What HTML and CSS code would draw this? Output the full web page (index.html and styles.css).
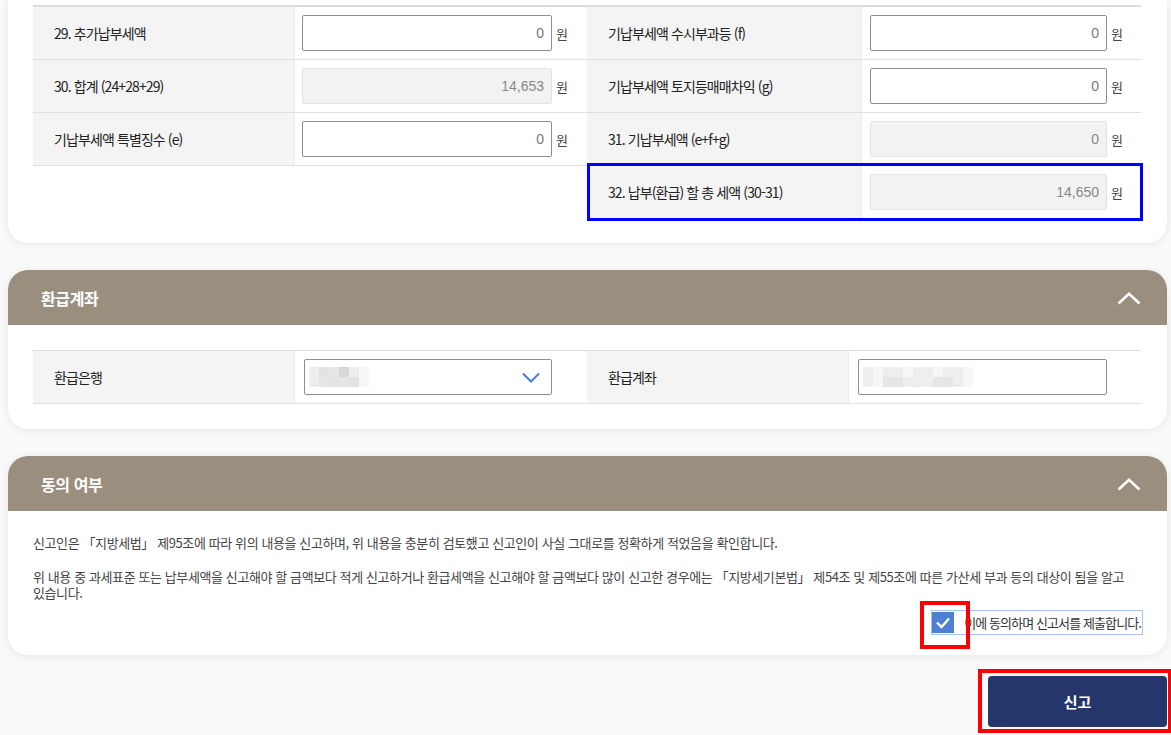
FILE: index.html
```html
<!DOCTYPE html>
<html lang="ko">
<head>
<meta charset="utf-8">
<title>신고</title>
<link rel="stylesheet" href="styles.css">
</head>
<body>
<div class="page">
  <section class="card card-top">
    <div class="grid grid-tax">
      <div class="th">29. 추가납부세액</div>
      <div class="td td-l"><span class="inp">0</span><span class="unit">원</span></div>
      <div class="th">기납부세액 수시부과등 (f)</div>
      <div class="td td-r"><span class="inp inp-r">0</span><span class="unit">원</span></div>

      <div class="th">30. 합계 (24+28+29)</div>
      <div class="td td-l"><span class="inp dis">14,653</span><span class="unit">원</span></div>
      <div class="th">기납부세액 토지등매매차익 (g)</div>
      <div class="td td-r"><span class="inp inp-r">0</span><span class="unit">원</span></div>

      <div class="th">기납부세액 특별징수 (e)</div>
      <div class="td td-l"><span class="inp">0</span><span class="unit">원</span></div>
      <div class="th">31. 기납부세액 (e+f+g)</div>
      <div class="td td-r"><span class="inp inp-r dis">0</span><span class="unit">원</span></div>

      <div class="blank"></div>
      <div class="blank"></div>
      <div class="hl">
        <div class="th">32. 납부(환급) 할 총 세액 (30-31)</div>
        <div class="td td-r"><span class="inp inp-r dis">14,650</span><span class="unit">원</span></div>
      </div>
    </div>
  </section>

  <section class="card">
    <header class="card-head">
      <h2>환급계좌</h2>
      <svg class="chev" width="24" height="13" viewBox="0 0 24 13"><polyline points="1.5,11.5 12,1.8 22.5,11.5" fill="none" stroke="#fff" stroke-width="2.6"/></svg>
    </header>
    <div class="card-body">
      <div class="grid grid-bank">
        <div class="th">환급은행</div>
        <div class="td">
          <div class="select">
            <div class="blur b6">
              <i class="c1"></i><i class="c2"></i><i class="c3"></i><i class="c4"></i><i class="c5"></i><i class="c6"></i>
              <i class="c1"></i><i class="c3"></i><i class="c2"></i><i class="c3"></i><i class="c2"></i><i class="c6"></i>
            </div>
            <svg class="sel-arrow" width="18" height="11" viewBox="0 0 18 11"><polyline points="1,1.5 9,9.5 17,1.5" fill="none" stroke="#4a7bd0" stroke-width="2"/></svg>
          </div>
        </div>
        <div class="th">환급계좌</div>
        <div class="td">
          <div class="acct">
            <div class="blur b11">
              <i class="c1"></i><i class="c6"></i><i class="c1"></i><i class="c1"></i><i class="c6"></i><i class="c1"></i><i class="c1"></i><i class="c6"></i><i class="c1"></i><i class="c1"></i><i class="c6"></i>
              <i class="c1"></i><i class="c6"></i><i class="c3"></i><i class="c3"></i><i class="c1"></i><i class="c5"></i><i class="c1"></i><i class="c3"></i><i class="c3"></i><i class="c1"></i><i class="c6"></i>
            </div>
          </div>
        </div>
      </div>
    </div>
  </section>

  <section class="card">
    <header class="card-head">
      <h2>동의 여부</h2>
      <svg class="chev" width="24" height="13" viewBox="0 0 24 13"><polyline points="1.5,11.5 12,1.8 22.5,11.5" fill="none" stroke="#fff" stroke-width="2.6"/></svg>
    </header>
    <div class="card-body consent">
      <p>신고인은 「지방세법」 제95조에 따라 위의 내용을 신고하며, 위 내용을 충분히 검토했고 신고인이 사실 그대로를 정확하게 적었음을 확인합니다.</p>
      <p>위 내용 중 과세표준 또는 납부세액을 신고해야 할 금액보다 적게 신고하거나 환급세액을 신고해야 할 금액보다 많이 신고한 경우에는 「지방세기본법」 제54조 및 제55조에 따른 가산세 부과 등의 대상이 됨을 알고 있습니다.</p>
      <div class="agree-row">
        <label class="agree">
          <span class="chk-wrap">
            <span class="chk">
              <svg width="22" height="21" viewBox="0 0 22 21"><polyline points="5,10.5 9.5,15 17,6.5" fill="none" stroke="#fff" stroke-width="2.4"/></svg>
            </span>
          </span>
          <span class="agree-text">이에 동의하며 신고서를 제출합니다.</span>
        </label>
      </div>
    </div>
  </section>

  <div class="actions">
    <div class="btn-wrap">
      <button class="btn-submit" type="button">신고</button>
    </div>
  </div>
</div>
</body>
</html>
```

FILE: styles.css
```css
* { box-sizing: border-box; }

html, body {
  margin: 0;
  padding: 0;
}

body {
  background: #fafafa;
  font-family: "Noto Sans CJK KR", "Noto Sans", sans-serif;
  color: #222;
  width: 1171px;
  height: 735px;
  overflow: hidden;
}

.page {
  padding: 0 4px 0 8px;
}

.card {
  background: #fff;
  border-radius: 20px;
  box-shadow: 0 1px 8px rgba(0, 0, 0, 0.09);
  margin-top: 27px;
  overflow: hidden;
}

.card-top {
  margin-top: 0;
  border-radius: 0 0 20px 20px;
  padding: 5px 26px 24px 25px;
}

.grid {
  display: grid;
}

.grid-tax {
  grid-template-columns: 261px 293px 274px 280px;
  border-top: 2px solid #dcdcdc;
}

.grid-bank {
  grid-template-columns: 261px 293px 261px 293px;
  border-top: 1px solid #dcdcdc;
}

.th, .td {
  height: 53px;
  border-bottom: 1px solid #e0e0e0;
  display: flex;
  align-items: center;
}

.th {
  background: #f4f4f4;
  padding-left: 21px;
  font-size: 14px;
  letter-spacing: -0.9px;
  color: #222;
}

.td {
  border-left: 1px solid #ececec;
  padding-left: 7px;
}

.td-r {
  padding-left: 8px;
}

.blank {
  height: 53px;
}

.hl {
  grid-column: 3 / span 2;
  display: grid;
  grid-template-columns: 274px 280px;
  position: relative;
}

.hl::after {
  content: "";
  position: absolute;
  top: -3px;
  left: 0;
  right: -2px;
  bottom: -2px;
  border: 3px solid #0000ff;
  pointer-events: none;
}

.inp {
  display: block;
  width: 250px;
  height: 36px;
  line-height: 34px;
  border: 1px solid #8e8e8e;
  border-radius: 2px;
  background: #fff;
  text-align: right;
  padding-right: 7px;
  font-family: "Liberation Sans", "Noto Sans", sans-serif;
  font-size: 14px;
  color: #777;
}

.inp-r {
  width: 237px;
}

.inp.dis {
  background: #f2f2f2;
  border-color: #e3e3e3;
  color: #888;
}

.unit {
  margin-left: 4px;
  font-size: 13px;
  color: #444;
}

.card-head {
  height: 55px;
  background: #9a8f7e;
  display: flex;
  align-items: center;
  justify-content: space-between;
  padding: 0 26px 0 33px;
}

.card-head h2 {
  margin: 0;
  font-size: 16px;
  font-weight: 700;
  color: #fff;
  letter-spacing: -0.4px;
}

.chev {
  display: block;
  margin-top: 1px;
}

.card-body {
  padding: 25px 26px 25px 25px;
}

.select, .acct {
  height: 36px;
  border: 1px solid #8e8e8e;
  border-radius: 2px;
  background: #fff;
  display: flex;
  align-items: center;
  justify-content: space-between;
}

.select {
  width: 248px;
  margin-left: 2px;
  padding: 0 11px 0 4px;
}

.acct {
  width: 249px;
  margin-left: 2px;
  padding: 0 4px;
}

.blur {
  display: grid;
  grid-auto-rows: 10px;
}

.b6 { grid-template-columns: repeat(6, 10px); }
.b11 { grid-template-columns: repeat(11, 10px); }

.blur i { display: block; }
.c1 { background: #eeeeee; }
.c2 { background: #e2e2e4; }
.c3 { background: #e6e6e8; }
.c4 { background: #d9d6d6; }
.c5 { background: #ededf0; }
.c6 { background: #f5f7f9; }

.consent {
  padding: 24px 26px 20px 25px;
  font-size: 13px;
  color: #444;
}

.consent p {
  margin: 0 0 18px;
  line-height: 16px;
  letter-spacing: -0.4px;
  word-break: keep-all;
}

.consent p + p {
  margin-bottom: 9px;
}

.agree-row {
  display: flex;
  justify-content: flex-end;
  margin-right: -2px;
}

.agree {
  display: flex;
  align-items: center;
  height: 25px;
  border: 1px solid #a8c3f3;
  padding-right: 1px;
}

.chk-wrap {
  position: relative;
  display: block;
}

.chk-wrap::after {
  content: "";
  position: absolute;
  left: -12px;
  top: -11px;
  width: 42px;
  height: 40px;
  border: 4px solid #ff0000;
  pointer-events: none;
}

.chk {
  display: block;
  width: 22px;
  height: 21px;
  background: #4f7fd1;
}

.chk svg { display: block; }

.agree-text {
  margin-left: 10px;
  font-size: 13px;
  letter-spacing: -0.9px;
  color: #333;
}

.actions {
  display: flex;
  justify-content: flex-end;
  margin-top: 21px;
}

.btn-wrap {
  position: relative;
}

.btn-wrap::after {
  content: "";
  position: absolute;
  left: -10px;
  top: -7px;
  right: -5px;
  bottom: -6px;
  border: 4px solid #ff0000;
  pointer-events: none;
}

.btn-submit {
  display: block;
  width: 179px;
  height: 51px;
  border: 0;
  border-radius: 4px;
  background: #25366a;
  color: #fff;
  font-family: "Noto Sans CJK KR", "Noto Sans", sans-serif;
  font-size: 15px;
  font-weight: 700;
}
```
